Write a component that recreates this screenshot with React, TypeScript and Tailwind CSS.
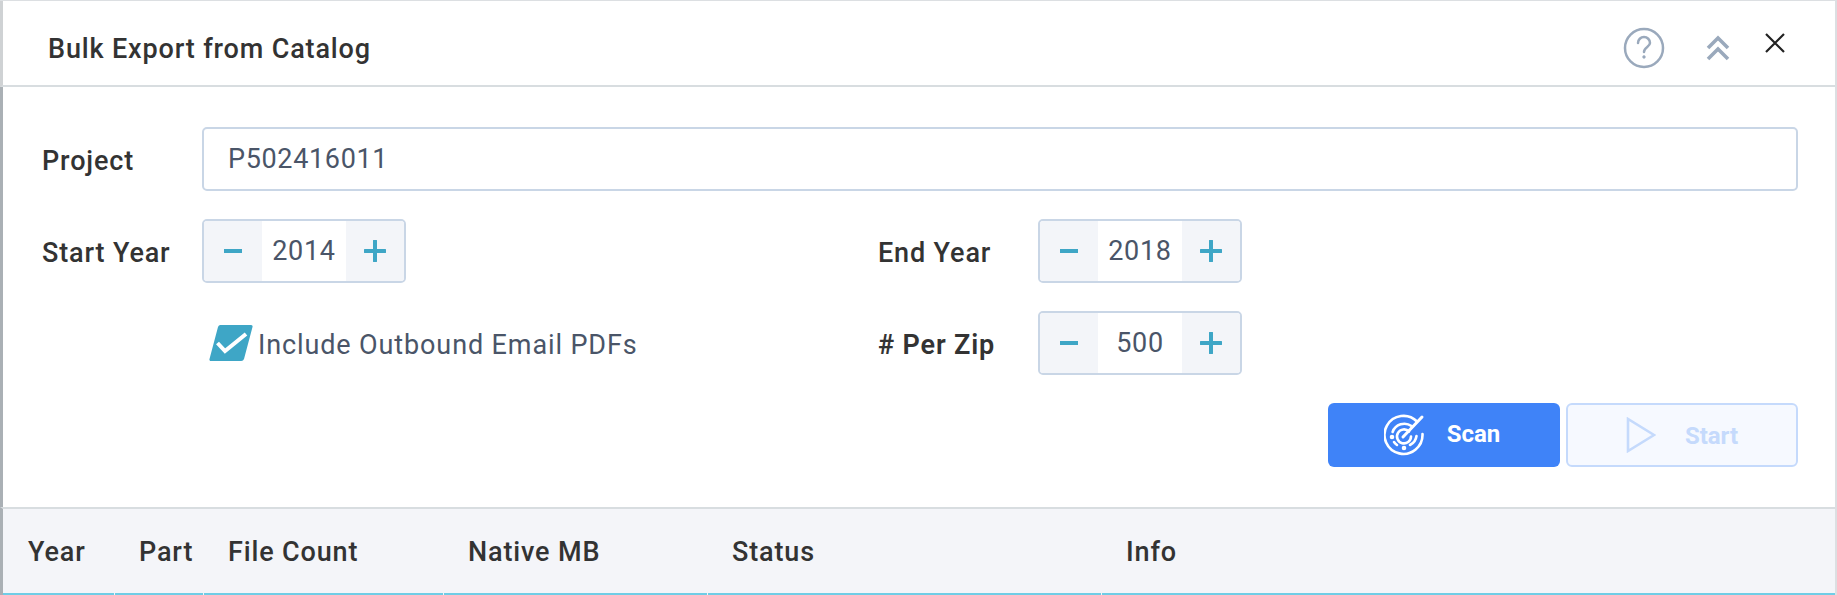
import React from "react";

const font = { fontFamily: "Roboto, sans-serif" };

const Stepper = ({ value }: { value: string }) => (
  <div className="flex h-16 w-[204px] overflow-hidden rounded-[5px] border-2 border-[#c9d6e6]">
    <div className="flex w-[58px] items-center justify-center bg-[#f3f5f9]">
      <svg width="20" height="20" viewBox="0 0 20 20">
        <path d="M1 10h18" stroke="#3ea6c6" strokeWidth="4" strokeLinecap="butt" />
      </svg>
    </div>
    <div className="flex flex-1 items-center justify-center bg-white pt-px text-[27px] tracking-[0.7px] text-[#4a5568]">
      {value}
    </div>
    <div className="flex w-[58px] items-center justify-center bg-[#f3f5f9]">
      <svg width="22" height="22" viewBox="0 0 22 22">
        <path d="M1 11h20M11 1v20" stroke="#3ea6c6" strokeWidth="4" strokeLinecap="round" />
      </svg>
    </div>
  </div>
);

const Label = ({ children }: { children: React.ReactNode }) => (
  <div className="w-40 shrink-0 pt-1 text-[27px] font-medium tracking-[0.85px] text-[#333]">{children}</div>
);

const RadarIcon = () => (
  <svg width="42" height="42" viewBox="0 0 42 42" fill="none" stroke="#fff" strokeWidth="2.6" strokeLinecap="round">
    <path d="M33 7.5A19 19 0 1 0 38.5 20" />
    <path d="M27.5 12A12.5 12.5 0 0 0 8.6 18" />
    <path d="M32.5 22A12 12 0 0 1 26 31" />
    <path d="M13 31a12 12 0 0 1-3-3" />
    <path d="M25 17.5A7 7 0 1 0 27 22.5" />
    <path d="M19 23L38 3" strokeWidth="3" />
    <circle cx="8" cy="23" r="1" fill="#fff" />
    <circle cx="20" cy="34" r="1" fill="#fff" />
  </svg>
);

const columns = [
  { name: "Year", width: "w-[111px]" },
  { name: "Part", width: "w-[89px]" },
  { name: "File Count", width: "w-[240px]" },
  { name: "Native MB", width: "w-[264px]" },
  { name: "Status", width: "w-[394px]" },
  { name: "Info", width: "flex-1" },
];

export default function App() {
  return (
    <div style={font} className="flex h-[595px] w-[1837px] flex-col border-t border-r-2 border-[#dcdfe2] bg-white">
      <div className="flex h-[86px] shrink-0 items-center border-b-2 border-l-[3px] border-b-[#d8dde0] border-l-[#cfd2d4] pl-[45px] pr-[49px]">
        <h1 className="pt-3 text-[27px] font-medium tracking-[0.85px] text-[#333]">Bulk Export from Catalog</h1>
        <div className="ml-auto flex items-center">
          <svg width="42" height="42" viewBox="0 0 42 42" fill="none" stroke="#9aa9bc" className="mt-[9px]">
            <circle cx="21" cy="21" r="19" strokeWidth="2.5" />
            <path d="M15 16a6 6 0 0 1 12 0c0 4-6 4-6 9" strokeWidth="2.5" strokeLinecap="round" />
            <circle cx="21" cy="30" r="1.4" fill="#9aa9bc" strokeWidth="0.5" />
          </svg>
          <svg width="24" height="26" viewBox="0 0 24 26" fill="none" stroke="#9aa9bc" strokeWidth="3.6" className="ml-[41px] mt-[9px]">
            <path d="M2 13l10-10 10 10" />
            <path d="M2 24l10-10 10 10" />
          </svg>
          <svg width="22" height="22" viewBox="0 0 22 22" fill="none" stroke="#222" strokeWidth="2.2" className="ml-[34px]">
            <path d="M2 2l18 18M20 2L2 20" />
          </svg>
        </div>
      </div>

      <div className="flex flex-1 flex-col border-l-[3px] border-l-[#aab0b5] pl-[39px] pr-[37px] pt-10">
        <div className="flex items-center">
          <Label>Project</Label>
          <div className="flex h-16 flex-1 items-center rounded-[5px] border-2 border-[#c9d6e6] pl-6 pt-px text-[27px] tracking-[0.65px] text-[#4a5568]">
            P502416011
          </div>
        </div>

        <div className="mt-7 flex items-center">
          <div className="flex w-[836px] items-center">
            <Label>Start Year</Label>
            <Stepper value="2014" />
          </div>
          <div className="flex items-center">
            <Label>End Year</Label>
            <Stepper value="2018" />
          </div>
        </div>

        <div className="mt-7 flex items-center">
          <div className="flex w-[836px] items-center pl-[167px]">
            <svg width="44" height="38" viewBox="0 0 44 38">
              <path d="M11 1h31a1.5 1.5 0 0 1 1.5 2L35 35a3 3 0 0 1-3 2H2a1.5 1.5 0 0 1-1.5-2L9 3a3 3 0 0 1 2-2z" fill="#3ea6c6" />
              <path d="M8.5 19l7.5 8L37 10" fill="none" stroke="#fff" strokeWidth="4" />
            </svg>
            <span className="ml-[5px] pt-1 text-[27px] tracking-[0.88px] text-[#4a5568]">Include Outbound Email PDFs</span>
          </div>
          <div className="flex items-center">
            <Label>
              <span className="font-semibold"># Per Zip</span>
            </Label>
            <Stepper value="500" />
          </div>
        </div>

        <div className="mt-7 flex justify-end gap-[6px]">
          <button className="flex h-16 w-[232px] items-center justify-center gap-[21px] rounded-[6px] bg-[#3f83f8] pr-1 text-[24px] font-bold text-white">
            <RadarIcon />
            <span className="-mt-0.5">Scan</span>
          </button>
          <button className="flex h-16 w-[232px] items-center justify-center gap-[29px] rounded-[6px] border-2 border-[#c5dafc] bg-[#f6f9ff] text-[24px] font-bold text-[#c5dafc]">
            <svg width="30" height="36" viewBox="0 0 30 36" fill="none" stroke="#c5dafc" strokeWidth="2.6">
              <path d="M2 2v32l26-16z" />
            </svg>
            <span className="pt-0.5">Start</span>
          </button>
        </div>
      </div>

      <div className="flex h-[88px] shrink-0 border-l-[3px] border-t-2 border-l-[#aab0b5] border-t-[#d8dde0] bg-[#f4f5f9]">
        {columns.map((col, i) => (
          <div key={col.name} className={`flex flex-col ${col.width}`}>
            <div className="flex flex-1 items-center pl-[25px] pt-0.5 text-[27px] font-medium tracking-[0.85px] text-[#333]">{col.name}</div>
            <div className={i === 0 ? "h-[2px] bg-[#6fcde6]" : "ml-px h-[2px] bg-[#6fcde6]"} />
          </div>
        ))}
      </div>
    </div>
  );
}
